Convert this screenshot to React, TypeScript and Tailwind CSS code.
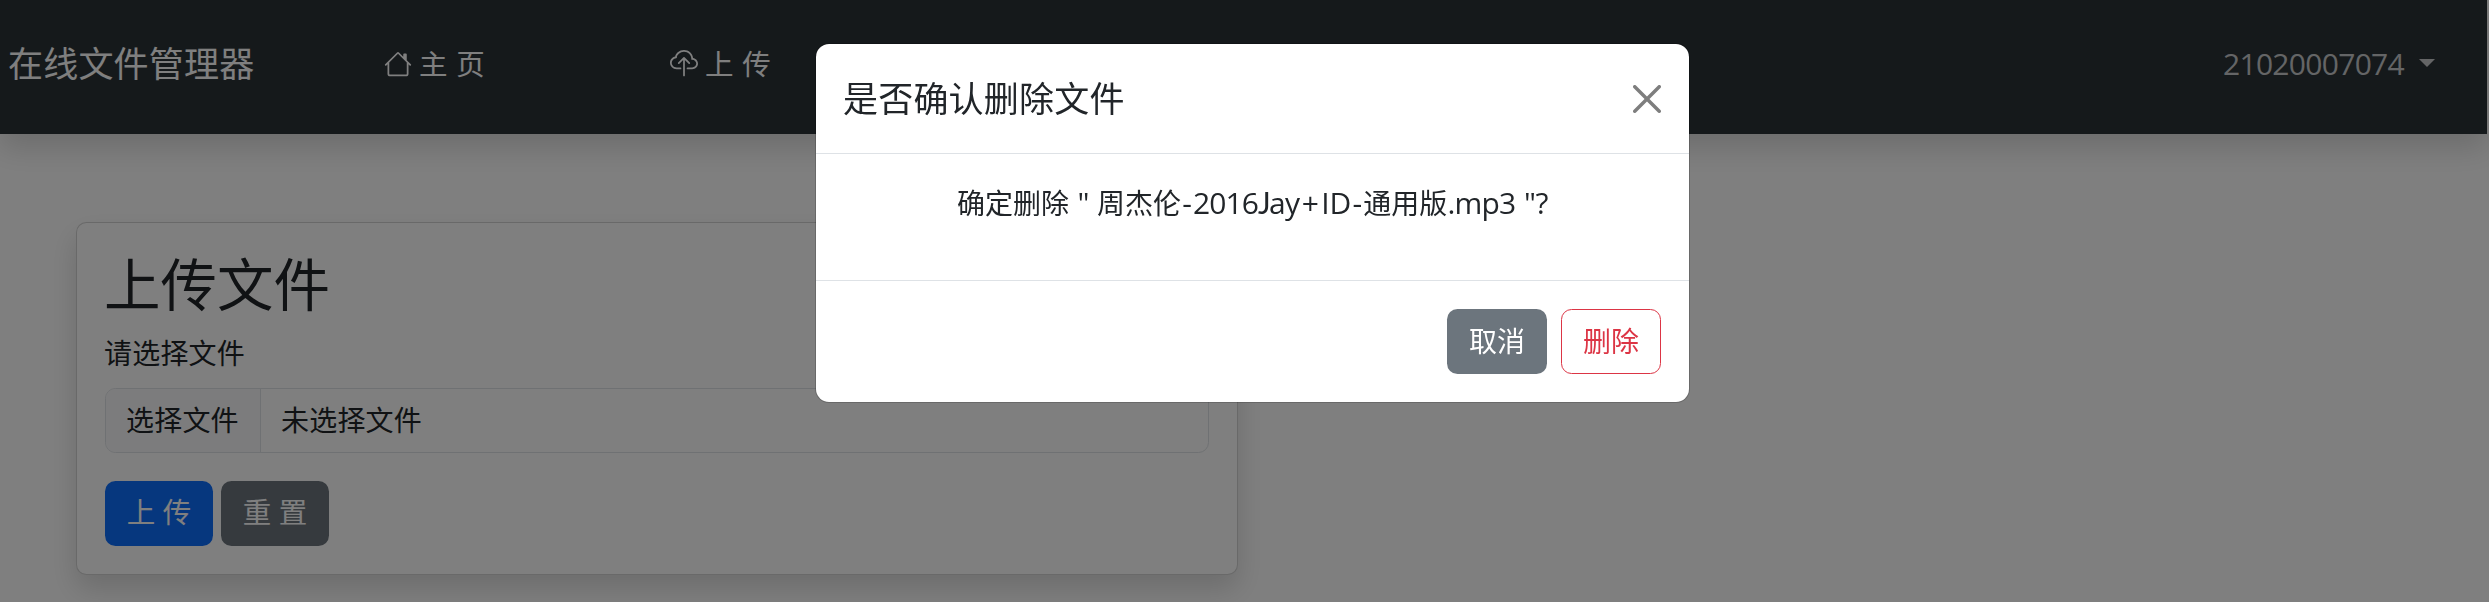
import React from "react";
import { BsCloudUpload, BsHouse } from "react-icons/bs";

function Navbar() {
  return (
    <header className="mr-0.5 flex h-[134px] items-center bg-[#2a3237] pb-1.5 pl-2 pr-[52px] text-white shadow-[0_14px_28px_rgba(0,0,0,0.15)]">
      <div className="w-[376px] text-[35px] leading-[52px] tracking-[0.2px]">在线文件管理器</div>
      <a className="flex w-[286px] items-center gap-[7px]">
        <BsHouse size={28} />
        <span className="text-[28.5px]">主 页</span>
      </a>
      <a className="flex items-center gap-[7px]">
        <BsCloudUpload size={28} />
        <span className="text-[28.5px]">上 传</span>
      </a>
      <a className="ml-auto flex items-center gap-[15px] pb-0.5 text-white/75">
        <span className="text-[30px] tracking-[-0.7px]">21020007074</span>
        <span className="border-x-8 border-t-8 border-x-transparent border-t-current" />
      </a>
    </header>
  );
}

function UploadCard() {
  return (
    <section className="ml-[76px] mt-[88px] h-[353px] w-[1162px] rounded-[10.5px] border border-black/[0.175] bg-white p-7 shadow-[0_14px_28px_rgba(0,0,0,0.15)]">
      <h2 className="-ml-px mb-3.5 pt-px text-[56.5px] leading-[66px]">上传文件</h2>
      <div className="-ml-px leading-[42px] tracking-[0.2px]">请选择文件</div>
      <div className="mt-3.5 flex h-[65px] overflow-hidden rounded-[10.5px] border border-[#dee2e6] tracking-[0.2px]">
        <div className="flex w-[155px] items-center border-r border-[#dee2e6] bg-[#f8f9fa] pb-0.5 pl-5">选择文件</div>
        <div className="flex items-center pb-0.5 pl-5">未选择文件</div>
      </div>
      <div className="mt-7 flex gap-2">
        <button className="h-[65px] w-[108px] rounded-[10.5px] bg-[#0d6efd] pb-0.5 text-[28.5px] text-white">上 传</button>
        <button className="h-[65px] w-[108px] rounded-[10.5px] bg-[#6c757d] pb-0.5 text-[28.5px] text-white">重 置</button>
      </div>
    </section>
  );
}

function FileMessage() {
  return (
    <p className="whitespace-pre text-center leading-[42px]">
      确定删除 <span className="text-[30px] tracking-[-1px]">"</span> 周杰伦
      <span className="text-[30px] leading-none">
        <span className="inline-block w-3 text-center">-</span>
        <span className="tracking-[-0.9px]">2016</span>
        <span className="inline-block w-[11px] text-center font-['Lato']">J</span>
        <span className="tracking-[-0.8px]">ay</span>
        <span className="inline-block w-[22px] text-center">+</span>
        <span>ID</span>
        <span className="inline-block w-3 text-center">-</span>
      </span>
      通用版<span className="text-[30px] tracking-[-0.8px]">.mp3</span> <span className="text-[30px] tracking-[-0.4px]">"?</span>
    </p>
  );
}

function DeleteDialog() {
  return (
    <div className="fixed inset-0 flex items-start justify-center bg-black/50 pr-4 pt-[43px]">
      <div className="ml-8 w-[875px] rounded-[14px] border border-black/[0.175] bg-white bg-clip-padding">
        <div className="flex h-[110px] items-center justify-between border-b border-[#dee2e6] pl-[27px] pr-7">
          <h5 className="text-[35px] leading-[52px] tracking-[0.2px]">是否确认删除文件</h5>
          <svg className="size-7 fill-black opacity-50" viewBox="0 0 16 16">
            <path d="M.293.293a1 1 0 0 1 1.414 0L8 6.586 14.293.293a1 1 0 1 1 1.414 1.414L9.414 8l6.293 6.293a1 1 0 0 1-1.414 1.414L8 9.414l-6.293 6.293a1 1 0 0 1-1.414-1.414L6.586 8 .293 1.707a1 1 0 0 1 0-1.414z" />
          </svg>
        </div>
        <div className="h-[126px] pt-7">
          <FileMessage />
        </div>
        <div className="flex h-[122px] items-center justify-end gap-3.5 border-t border-[#dee2e6] px-7">
          <button className="h-[65px] w-[100px] rounded-[10.5px] bg-[#6c757d] pb-0.5 text-white">取消</button>
          <button className="h-[65px] w-[100px] rounded-[10.5px] border border-[#dc3545] pb-0.5 text-[#dc3545]">删除</button>
        </div>
      </div>
    </div>
  );
}

export default function App() {
  return (
    <div className="h-[602px] overflow-hidden bg-white font-['Open_Sans','Noto_Sans_CJK_SC',sans-serif] text-[28px] text-[#212529] [word-spacing:1.3px]">
      <Navbar />
      <UploadCard />
      <DeleteDialog />
    </div>
  );
}
